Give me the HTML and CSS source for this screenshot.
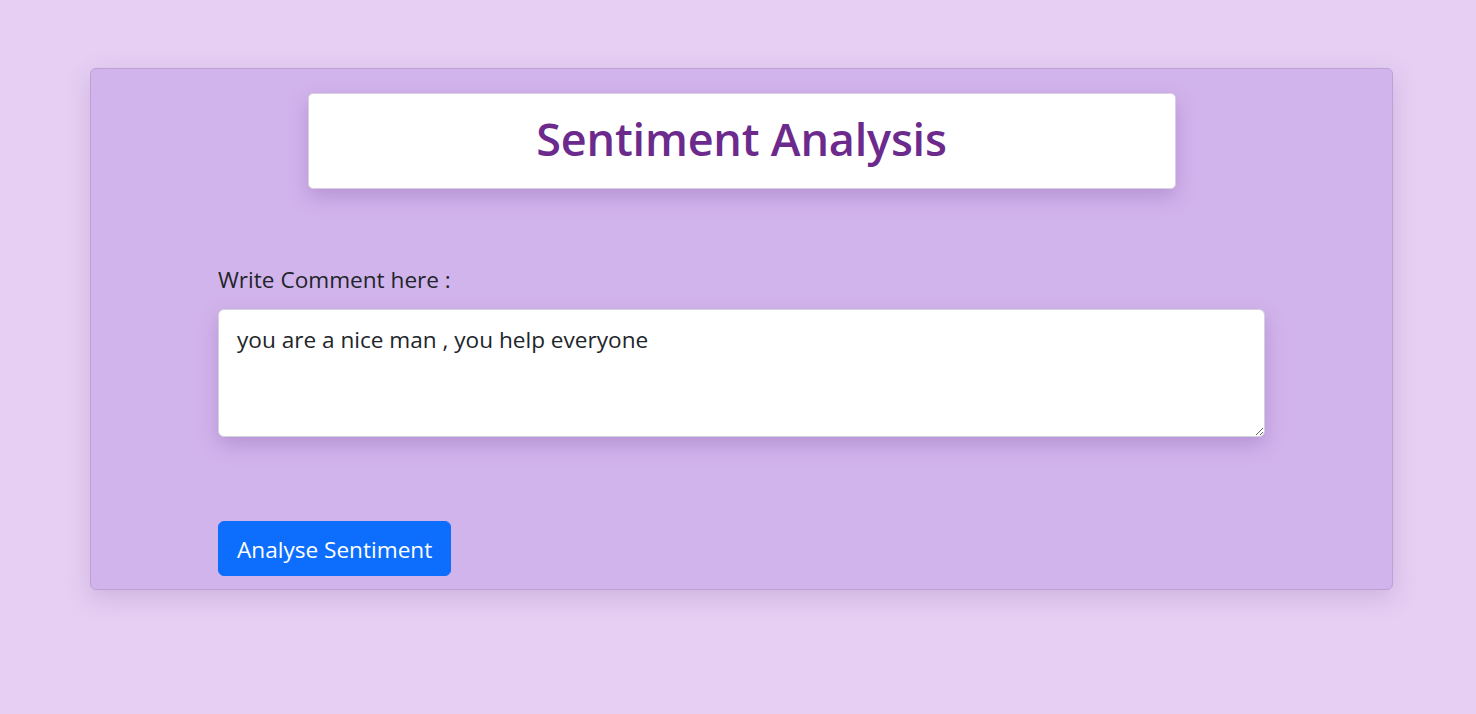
FILE: index.html
```html
<!DOCTYPE html>
<html lang="en">
<head>
<meta charset="utf-8">
<title>Sentiment Analysis</title>
<link rel="stylesheet" href="styles.css">
</head>
<body>
  <main class="card">
    <header class="title-box">
      <h1 class="title">Sentiment Analysis</h1>
    </header>
    <form class="form">
      <label class="label" for="comment">Write Comment here :</label>
      <textarea id="comment" class="comment">you are a nice man , you help everyone</textarea>
      <button type="button" class="btn">Analyse Sentiment</button>
    </form>
  </main>
</body>
</html>
```

FILE: styles.css
```css
* { box-sizing: border-box; }

html, body {
  margin: 0;
  padding: 0;
}

body {
  background: #e6cff3;
  font-family: "Open Sans", "Noto Sans", sans-serif;
  color: #212529;
  padding-top: 68px;
  height: 714px;
  overflow: hidden;
}

.card {
  margin-left: 90px;
  width: 1303px;
  background: #d2b4ec;
  border: 1px solid #bca0d6;
  border-radius: 6px;
  box-shadow: 0 8px 24px rgba(120, 80, 150, 0.22);
  padding: 24px 0 13px;
  display: flex;
  flex-direction: column;
  align-items: center;
}

.title-box {
  width: 868px;
  height: 96px;
  background: #fff;
  border: 1px solid #d8cfe0;
  border-radius: 5px;
  box-shadow: 0 8px 20px rgba(110, 60, 150, 0.28);
  display: flex;
  align-items: center;
  justify-content: center;
}

.title {
  margin: 0 0 4px;
  font-size: 45px;
  font-weight: 600;
  color: #6b2a8c;
  line-height: 1.2;
  letter-spacing: -0.2px;
}

.form {
  width: 1047px;
  display: flex;
  flex-direction: column;
  align-items: flex-start;
  margin-top: 74px;
}

.label {
  font-size: 22.6px;
  line-height: 34px;
  margin-bottom: 12px;
  color: #212529;
}

.comment {
  width: 100%;
  height: 128px;
  border: 1px solid #ced4da;
  border-radius: 6px;
  background: #fff;
  padding: 13px 18px;
  font-family: inherit;
  font-size: 22.6px;
  line-height: 34px;
  color: #212529;
  box-shadow: 0 8px 20px rgba(110, 60, 150, 0.28);
  resize: vertical;
}

.btn {
  margin-top: 84px;
  height: 55px;
  padding: 2px 18px 0;
  background: #0d6efd;
  color: #fff;
  border: 1px solid #0d6efd;
  border-radius: 6px;
  font-family: inherit;
  font-size: 22.6px;
  line-height: 34px;
}
```
